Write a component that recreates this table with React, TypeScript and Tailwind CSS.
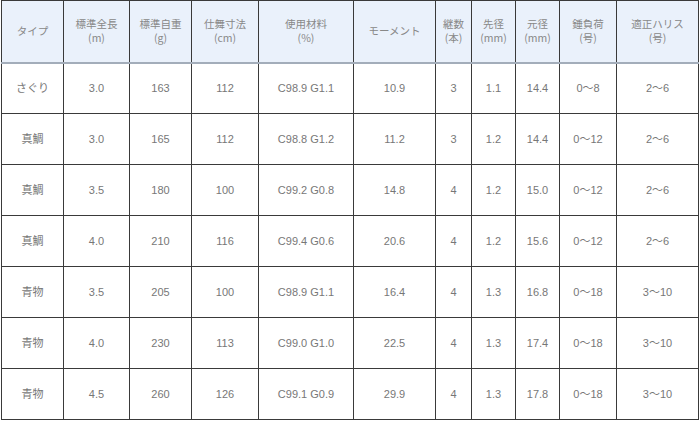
const headers: [string, string?][] = [
  ["タイプ"],
  ["標準全長", "(m)"],
  ["標準自重", "(g)"],
  ["仕舞寸法", "(cm)"],
  ["使用材料", "(%)"],
  ["モーメント"],
  ["継数", "(本)"],
  ["先径", "(mm)"],
  ["元径", "(mm)"],
  ["錘負荷", "(号)"],
  ["適正ハリス", "(号)"],
];

const widths = [
  "w-[62px]",
  "w-[66px]",
  "w-[62px]",
  "w-[67px]",
  "w-[95px]",
  "w-[82px]",
  "w-[36px]",
  "w-[44px]",
  "w-[44px]",
  "w-[57px]",
  "w-[82px]",
];

const rows = [
  ["さぐり", "3.0", "163", "112", "C98.9 G1.1", "10.9", "3", "1.1", "14.4", "0～8", "2～6"],
  ["真鯛", "3.0", "165", "112", "C98.8 G1.2", "11.2", "3", "1.2", "14.4", "0～12", "2～6"],
  ["真鯛", "3.5", "180", "100", "C99.2 G0.8", "14.8", "4", "1.2", "15.0", "0～12", "2～6"],
  ["真鯛", "4.0", "210", "116", "C99.4 G0.6", "20.6", "4", "1.2", "15.6", "0～12", "2～6"],
  ["青物", "3.5", "205", "100", "C98.9 G1.1", "16.4", "4", "1.3", "16.8", "0～18", "3～10"],
  ["青物", "4.0", "230", "113", "C99.0 G1.0", "22.5", "4", "1.3", "17.4", "0～18", "3～10"],
  ["青物", "4.5", "260", "126", "C99.1 G0.9", "29.9", "4", "1.3", "17.8", "0～18", "3～10"],
];

export default function App() {
  return (
    <div className="w-[700px] h-[423px] bg-white pl-px font-['Noto_Sans_CJK_JP','Noto_Sans',sans-serif]">
      <table className="w-[698px] table-fixed border-collapse text-[10.5px] leading-[14px] text-[#777]">
        <thead>
          <tr className="h-[62px] bg-[#eaf1fb] border-b-2 border-b-[#a3adba]">
            {headers.map(([a, b], i) => (
              <th
                key={i}
                className={`${widths[i]} border border-[#3a3a3a] border-b-[#a3adba] border-b-2 font-normal text-center align-middle text-[#888]`}
              >
                <div>{a}</div>
                {b && <div>{b}</div>}
              </th>
            ))}
          </tr>
        </thead>
        <tbody>
          {rows.map((r, ri) => (
            <tr key={ri} className="h-[51px]">
              {r.map((c, ci) => (
                <td
                  key={ci}
                  className="border border-[#3a3a3a] text-center align-middle font-['Liberation_Sans','Noto_Sans_CJK_JP',sans-serif] text-[11px] text-[#777]"
                >
                  {c}
                </td>
              ))}
            </tr>
          ))}
        </tbody>
      </table>
    </div>
  );
}
